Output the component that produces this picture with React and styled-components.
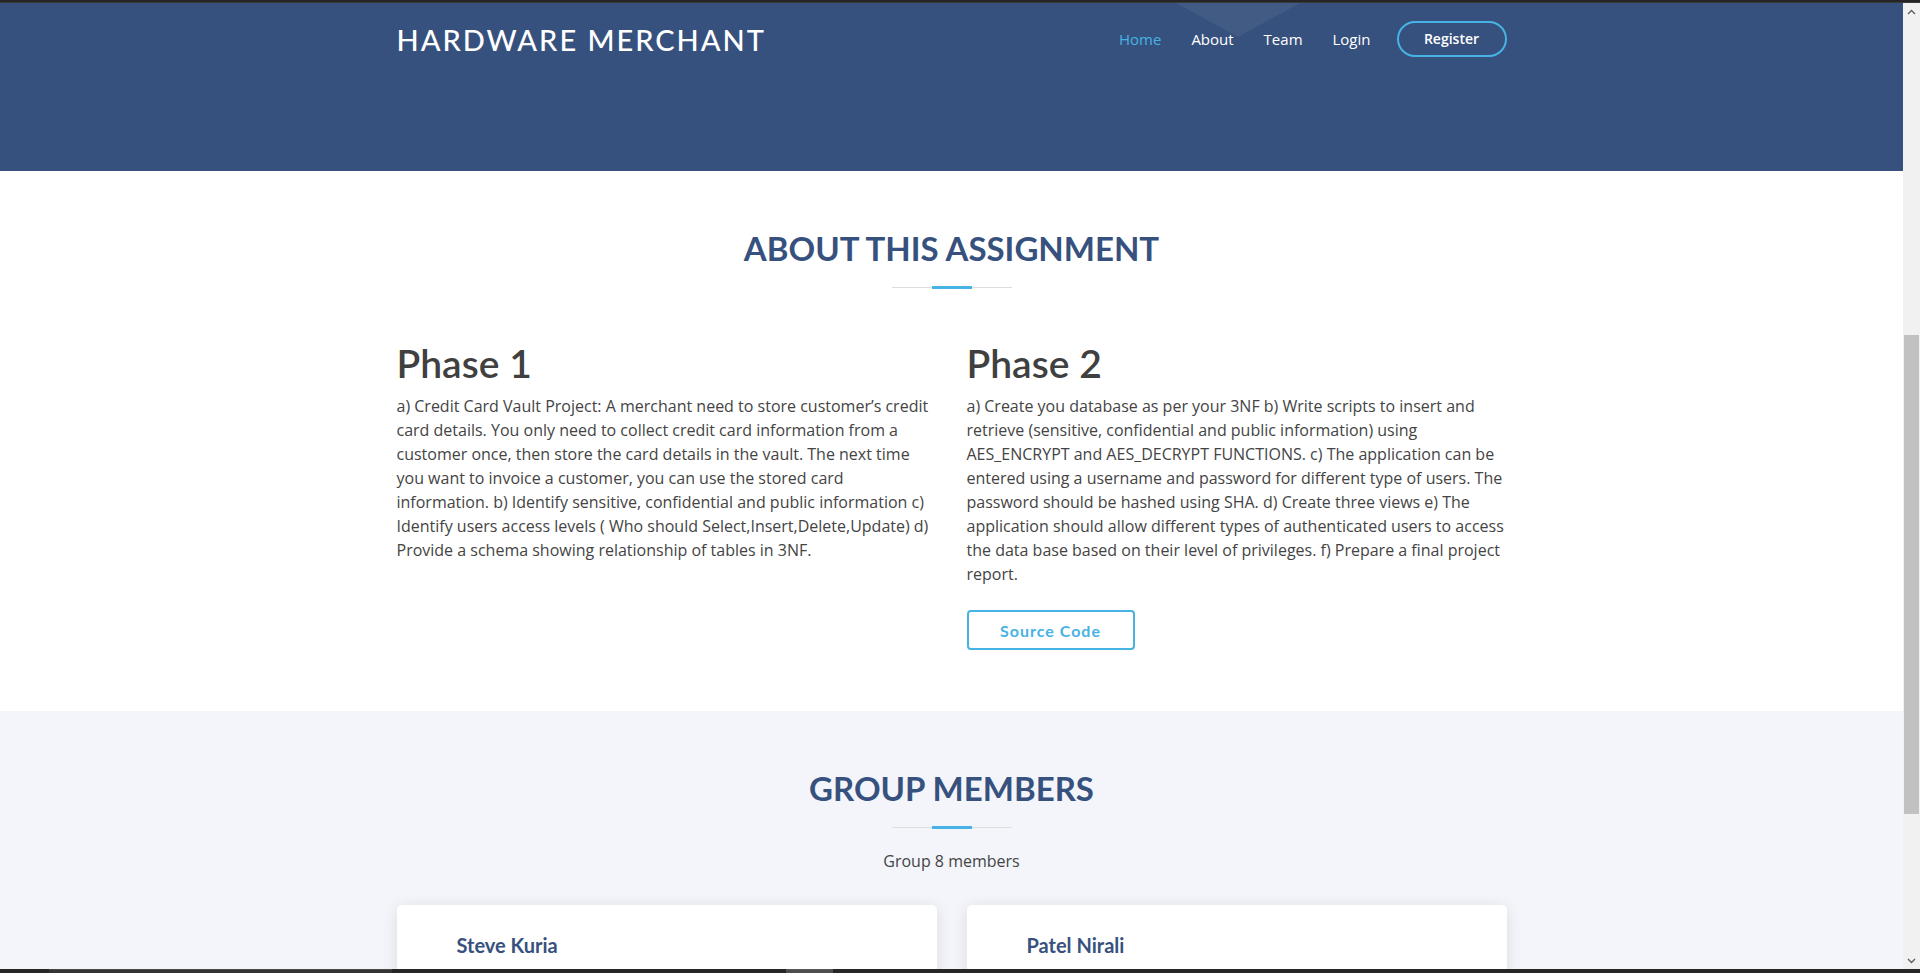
import React from "react";
import styled, { createGlobalStyle } from "styled-components";

const GlobalStyle = createGlobalStyle`
  html, body {
    margin: 0;
    padding: 0;
    height: 100%;
    overflow: hidden;
  }
  #root {
    height: 100%;
  }
  *, *::before, *::after {
    box-sizing: border-box;
  }
`;

const BLUE = "#37517e";
const ACCENT = "#47b2e4";
const TEXT = "#444444";
const HEAD_FONT = `"Lato", "Noto Sans", sans-serif`;
const BODY_FONT = `"Open Sans", "Noto Sans", sans-serif`;

const Frame = styled.div`
  height: 100vh;
  display: flex;
  flex-direction: column;
  background: #262626;
`;

const TopEdge = styled.div`
  height: 3px;
  flex: none;
  background: #252525;
  border-bottom: 1px solid #3a3a3a;
`;

const Viewport = styled.div`
  flex: 1;
  min-height: 0;
  display: flex;
`;

const Page = styled.main`
  flex: 1;
  min-width: 0;
  overflow: hidden;
  background: #ffffff;
  font-family: ${BODY_FONT};
  color: ${TEXT};
`;

const Header = styled.header`
  position: relative;
  height: 168px;
  background: ${BLUE};
  padding-top: 18px;
`;

const Triangle = styled.div`
  position: absolute;
  top: 0;
  left: calc(50% + 224px);
  width: 0;
  height: 0;
  border-left: 62px solid transparent;
  border-right: 62px solid transparent;
  border-top: 34px solid rgba(255, 255, 255, 0.06);
`;

const Container = styled.div`
  width: 1110px;
  margin: 0 auto;
`;

const HeaderBar = styled(Container)`
  position: relative;
  display: flex;
  align-items: center;
  justify-content: space-between;
  height: 36px;
`;

const Logo = styled.a`
  font-family: ${HEAD_FONT};
  font-size: 29px;
  font-weight: 500;
  letter-spacing: 2px;
  text-transform: uppercase;
  color: #ffffff;
  text-decoration: none;
  line-height: 1;
`;

const Nav = styled.nav`
  display: flex;
  align-items: center;
`;

const NavLink = styled.a`
  padding-left: 30px;
  font-family: ${BODY_FONT};
  font-size: 15px;
  font-weight: 500;
  color: ${(p) => (p.$active ? ACCENT : "#ffffff")};
  text-decoration: none;
  white-space: nowrap;
`;

const RegisterButton = styled.a`
  margin-left: 26px;
  width: 110px;
  height: 36px;
  display: flex;
  align-items: center;
  justify-content: center;
  border: 2px solid ${ACCENT};
  border-radius: 50px;
  font-family: ${BODY_FONT};
  font-size: 14px;
  font-weight: 600;
  color: #ffffff;
  text-decoration: none;
  padding-bottom: 2px;
`;

const Section = styled.section`
  background: ${(p) => (p.$alt ? "#f3f5fa" : "#ffffff")};
  padding: 57px 0 ${(p) => (p.$alt ? "0" : "61px")};
  ${(p) => (p.$alt ? "" : "height: 540px;")}
`;

const SectionTitle = styled.h2`
  position: relative;
  margin: 0;
  padding-bottom: 20px;
  font-family: ${HEAD_FONT};
  font-size: 33px;
  line-height: 41px;
  font-weight: 700;
  text-transform: uppercase;
  text-align: center;
  color: ${BLUE};

  &::before {
    content: "";
    position: absolute;
    left: calc(50% - 60px);
    bottom: 1px;
    width: 120px;
    height: 1px;
    background: #dddddd;
  }

  &::after {
    content: "";
    position: absolute;
    left: calc(50% - 20px);
    bottom: 0;
    width: 40px;
    height: 3px;
    background: ${ACCENT};
  }
`;

const PhaseGrid = styled.div`
  margin-top: 50px;
  display: grid;
  grid-template-columns: 540px 540px;
  column-gap: 30px;
`;

const Column = styled.div`
  display: flex;
  flex-direction: column;
  align-items: flex-start;
`;

const PhaseTitle = styled.h3`
  margin: 0 0 7px;
  font-family: ${HEAD_FONT};
  font-size: 39px;
  line-height: 48px;
  font-weight: 600;
  color: #404040;
`;

const Paragraph = styled.p`
  margin: 0;
  font-size: 16px;
  line-height: 24px;
  color: ${TEXT};
`;

const OutlineButton = styled.a`
  margin-top: 24px;
  width: 168px;
  height: 40px;
  display: flex;
  align-items: center;
  justify-content: center;
  border: 2px solid ${ACCENT};
  border-radius: 4px;
  font-family: ${HEAD_FONT};
  font-size: 16px;
  font-weight: 700;
  letter-spacing: 1px;
  color: ${ACCENT};
  text-decoration: none;
`;

const Subtitle = styled.p`
  margin: 20px 0 0;
  text-align: center;
  font-size: 16px;
  line-height: 24px;
  color: ${TEXT};
`;

const CardGrid = styled.div`
  margin-top: 32px;
  display: grid;
  grid-template-columns: 540px 540px;
  column-gap: 30px;
`;

const MemberCard = styled.div`
  background: #ffffff;
  border-radius: 5px;
  box-shadow: 0 2px 15px rgba(0, 0, 0, 0.1);
  padding: 28px 30px 60px 60px;
  height: 200px;
`;

const MemberName = styled.h4`
  margin: 0;
  font-family: ${HEAD_FONT};
  font-size: 20px;
  line-height: 24px;
  font-weight: 700;
  color: ${BLUE};
`;

const Scrollbar = styled.div`
  width: 17px;
  flex: none;
  display: flex;
  flex-direction: column;
  background: #f1f1f1;
`;

const ScrollArrow = styled.div`
  height: 17px;
  flex: none;
  display: flex;
  align-items: center;
  justify-content: center;
`;

const ScrollTrack = styled.div`
  flex: 1;
  display: flex;
  flex-direction: column;
  align-items: center;
`;

const ScrollThumb = styled.div`
  width: 15px;
  background: #c1c1c1;
`;

const BottomEdge = styled.div`
  height: 4px;
  flex: none;
  display: flex;
  background: #262626;
`;

const EdgeSegment = styled.div`
  margin-left: ${(p) => p.$offset}px;
  width: ${(p) => p.$width}px;
  background: ${(p) => p.$color};
  border-top: 1px solid ${(p) => p.$line};
`;

const Chevron = ({ up }) => (
  <svg width="9" height="6" viewBox="0 0 9 6">
    <polyline
      points={up ? "1,5 4.5,1.5 8,5" : "1,1 4.5,4.5 8,1"}
      fill="none"
      stroke="#5f5f5f"
      strokeWidth="1.4"
    />
  </svg>
);

const phases = [
  {
    title: "Phase 1",
    text:
      "a) Credit Card Vault Project: A merchant need to store customer\u2019s credit card details. You only need to collect credit card information from a customer once, then store the card details in the vault. The next time you want to invoice a customer, you can use the stored card information. b) Identify sensitive, confidential and public information c) Identify users access levels ( Who should Select,Insert,Delete,Update) d) Provide a schema showing relationship of tables in 3NF.",
  },
  {
    title: "Phase 2",
    text:
      "a) Create you database as per your 3NF b) Write scripts to insert and retrieve (sensitive, confidential and public information) using AES_ENCRYPT and AES_DECRYPT FUNCTIONS. c) The application can be entered using a username and password for different type of users. The password should be hashed using SHA. d) Create three views e) The application should allow different types of authenticated users to access the data base based on their level of privileges. f) Prepare a final project report.",
    button: "Source Code",
  },
];

const members = ["Steve Kuria", "Patel Nirali"];

export default function App() {
  const thumbOffset = 315;
  const thumbSize = 479;
  return (
    <Frame>
      <GlobalStyle />
      <TopEdge />
      <Viewport>
        <Page>
          <Header>
            <Triangle />
            <HeaderBar>
              <Logo href="#">Hardware Merchant</Logo>
              <Nav>
                <NavLink href="#" $active>
                  Home
                </NavLink>
                <NavLink href="#">About</NavLink>
                <NavLink href="#">Team</NavLink>
                <NavLink href="#">Login</NavLink>
                <RegisterButton href="#">Register</RegisterButton>
              </Nav>
            </HeaderBar>
          </Header>

          <Section>
            <Container>
              <SectionTitle>About this Assignment</SectionTitle>
              <PhaseGrid>
                {phases.map((p) => (
                  <Column key={p.title}>
                    <PhaseTitle>{p.title}</PhaseTitle>
                    <Paragraph>{p.text}</Paragraph>
                    {p.button && <OutlineButton href="#">{p.button}</OutlineButton>}
                  </Column>
                ))}
              </PhaseGrid>
            </Container>
          </Section>

          <Section $alt>
            <Container>
              <SectionTitle>Group Members</SectionTitle>
              <Subtitle>Group 8 members</Subtitle>
              <CardGrid>
                {members.map((m) => (
                  <MemberCard key={m}>
                    <MemberName>{m}</MemberName>
                  </MemberCard>
                ))}
              </CardGrid>
            </Container>
          </Section>
        </Page>
        <Scrollbar>
          <ScrollArrow>
            <Chevron up />
          </ScrollArrow>
          <ScrollTrack>
            <ScrollThumb style={{ marginTop: thumbOffset, height: thumbSize }} />
          </ScrollTrack>
          <ScrollArrow>
            <Chevron />
          </ScrollArrow>
        </Scrollbar>
      </Viewport>
      <BottomEdge>
        <EdgeSegment $offset={49} $width={343} $color="#333333" $line="#4a4a4a" />
        <EdgeSegment $offset={394} $width={47} $color="#4d4d4d" $line="#5a5a5a" />
      </BottomEdge>
    </Frame>
  );
}
